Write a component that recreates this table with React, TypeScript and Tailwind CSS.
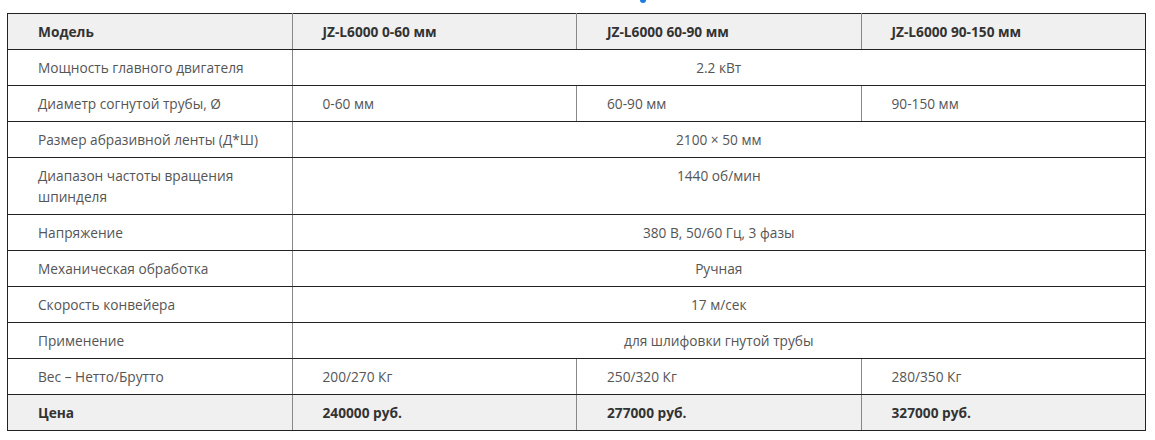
const rows: { label: string; values: string[] }[] = [
  { label: "Мощность главного двигателя", values: ["2.2 кВт"] },
  { label: "Диаметр согнутой трубы, Ø", values: ["0-60 мм", "60-90 мм", "90-150 мм"] },
  { label: "Размер абразивной ленты (Д*Ш)", values: ["2100 × 50 мм"] },
  { label: "Диапазон частоты вращения шпинделя", values: ["1440 об/мин"] },
  { label: "Напряжение", values: ["380 В, 50/60 Гц, 3 фазы"] },
  { label: "Механическая обработка", values: ["Ручная"] },
  { label: "Скорость конвейера", values: ["17 м/сек"] },
  { label: "Применение", values: ["для шлифовки гнутой трубы"] },
  { label: "Вес – Нетто/Брутто", values: ["200/270 Кг", "250/320 Кг", "280/350 Кг"] },
];

const cell = "border-y border-[#222] border-x border-x-[#888] px-[30px] py-[7px] align-top";

export default function App() {
  return (
    <div className="w-[1155px] h-[440px] bg-white overflow-hidden font-['Open_Sans',sans-serif] text-[13.7px] leading-[21px] text-[#555]">
      {/* cut-off heading above the table */}
      <div className="h-[13px] pl-[640px]">
        <div className="w-[6px] h-[3px] rounded-b-full bg-[#1b7be0]" />
      </div>

      <table className="ml-[7px] w-[1139px] table-fixed border-collapse border-x border-x-[#222]">
        <thead>
          <tr className="bg-[#f0f0f0] text-[#333] font-bold text-left">
            <th className={`${cell} border-l-[#222]`}>Модель</th>
            <th className={cell}>JZ-L6000 0-60 мм</th>
            <th className={cell}>JZ-L6000 60-90 мм</th>
            <th className={`${cell} border-r-[#222]`}>JZ-L6000 90-150 мм</th>
          </tr>
        </thead>
        <tbody>
          {rows.map((r) => (
            <tr key={r.label}>
              <td className={`${cell} border-l-[#222]`}>{r.label}</td>
              {r.values.length === 1 ? (
                <td colSpan={3} className={`${cell} text-center border-r-[#222]`}>
                  {r.values[0]}
                </td>
              ) : (
                r.values.map((v, i) => (
                  <td key={i} className={`${cell} ${i === 2 ? "border-r-[#222]" : ""}`}>
                    {v}
                  </td>
                ))
              )}
            </tr>
          ))}
          <tr className="bg-[#f0f0f0] text-[#333] font-bold">
            <td className={`${cell} border-l-[#222]`}>Цена</td>
            <td className={cell}>240000 руб.</td>
            <td className={cell}>277000 руб.</td>
            <td className={`${cell} border-r-[#222]`}>327000 руб.</td>
          </tr>
        </tbody>
      </table>
    </div>
  );
}
